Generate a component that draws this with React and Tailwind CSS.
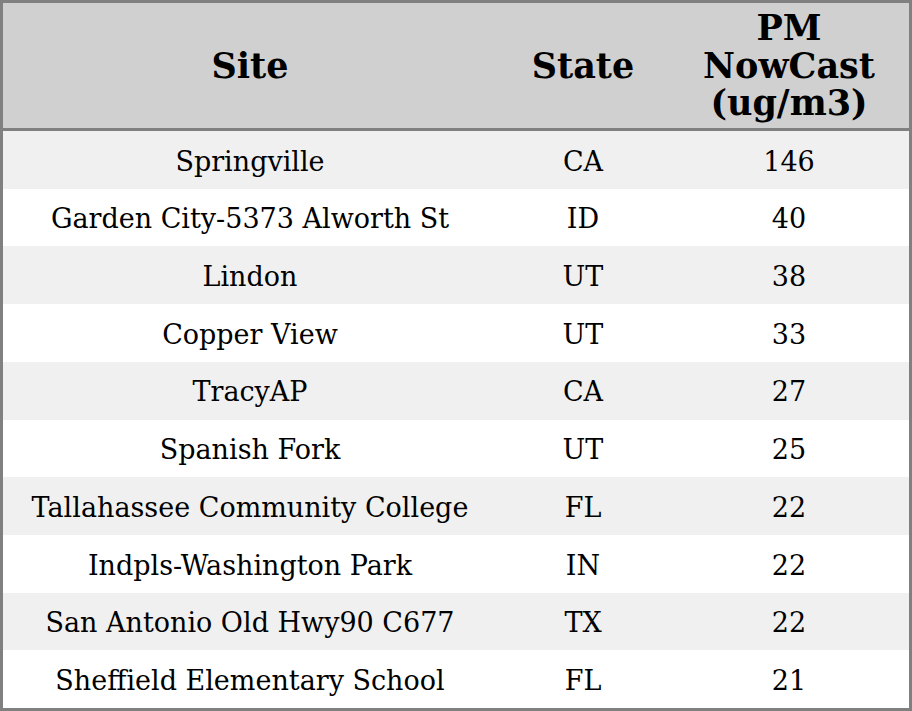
const rows = [
  ['Springville', 'CA', 146],
  ['Garden City-5373 Alworth St', 'ID', 40],
  ['Lindon', 'UT', 38],
  ['Copper View', 'UT', 33],
  ['TracyAP', 'CA', 27],
  ['Spanish Fork', 'UT', 25],
  ['Tallahassee Community College', 'FL', 22],
  ['Indpls-Washington Park', 'IN', 22],
  ['San Antonio Old Hwy90 C677', 'TX', 22],
  ['Sheffield Elementary School', 'FL', 21],
]

export default function App() {
  return (
    <div className="w-[912px] h-[711px] bg-white font-['DejaVu_Serif',serif] text-black">
      <div className="border-[3px] border-[#808080] h-full flex flex-col">
        <div className="grid grid-cols-[494px_172px_240px] h-[128px] bg-[#d0d0d0] border-b-[3px] border-[#808080] font-bold text-[35px] leading-[37.5px]">
          <div className="flex items-center justify-center">Site</div>
          <div className="flex items-center justify-center">State</div>
          <div className="flex items-center justify-center text-center">PM<br />NowCast<br />(ug/m3)</div>
        </div>
        <div className="flex-1 flex flex-col text-[27px]">
          {rows.map(([site, st, pm], i) => (
            <div key={site}
              className={`flex-1 grid grid-cols-[494px_172px_240px] items-center text-center pt-[4px] ${i % 2 === 0 ? 'bg-[#f0f0f0]' : 'bg-white'}`}>
              <div>{site}</div>
              <div>{st}</div>
              <div>{pm}</div>
            </div>
          ))}
        </div>
      </div>
    </div>
  )
}
